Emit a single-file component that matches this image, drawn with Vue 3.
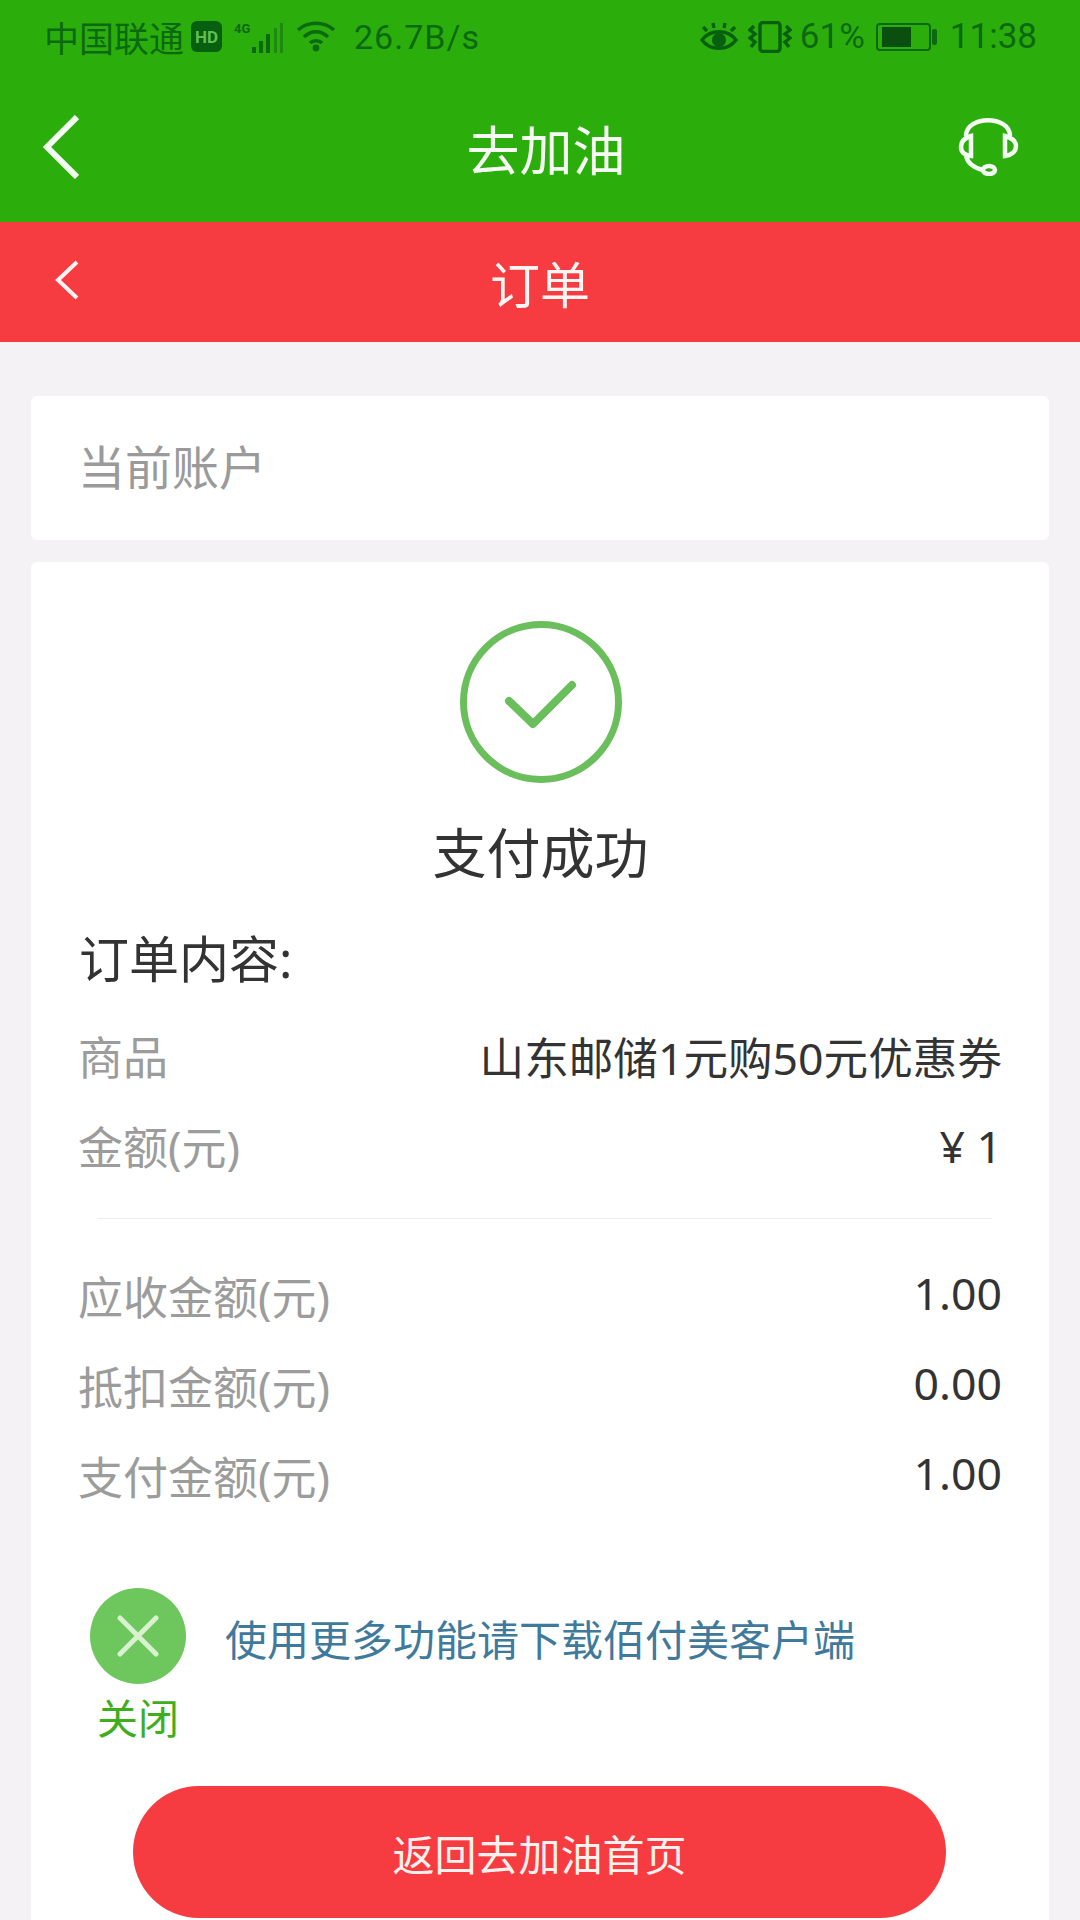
<template>
  <div class="page">
    <div class="topbar">
      <div class="status">
        <div class="status-left">
          <span class="carrier">中国联通</span>
          <svg class="hd" width="31" height="31" viewBox="0 0 31 31">
            <rect width="31" height="31" rx="6" fill="#075f10" />
            <text x="15.5" y="22" text-anchor="middle" class="hd-text">HD</text>
          </svg>
          <svg class="signal" width="52" height="32" viewBox="0 0 52 32">
            <text x="0" y="12" class="g-text">4G</text>
            <g fill="#0b6a10">
              <rect x="18" y="26" width="4" height="6" />
              <rect x="25" y="20" width="4" height="12" />
              <rect x="32" y="13" width="4" height="19" />
            </g>
            <g fill="#1f8a10">
              <rect x="40" y="7" width="3" height="25" />
              <rect x="46" y="2" width="3" height="30" />
            </g>
          </svg>
          <svg class="wifi" width="38" height="32" viewBox="0 0 38 32" fill="none" stroke="#0b6a10" stroke-width="3.6">
            <path d="M1 9C11 0 27 0 37 9" />
            <path d="M7 16C14 9 24 9 31 16" />
            <path d="M13 22C16 19 22 19 25 22" />
            <circle cx="19" cy="27" r="3.4" fill="#0b6a10" stroke="none" />
          </svg>
          <span class="speed">26.7B/s</span>
        </div>
        <div class="status-right">
          <svg class="eye" width="38" height="30" viewBox="0 0 38 30" fill="none" stroke="#075f10" stroke-width="3.4">
            <path d="M2 18C10 7 28 7 36 18C28 29 10 29 2 18Z" />
            <circle cx="19" cy="18" r="7" fill="#075f10" stroke="none" />
            <path d="M7 9L3 5M14 6L13 1M24 6L25 1M31 9L35 5" />
          </svg>
          <svg class="vibrate" width="44" height="32" viewBox="0 0 44 32" fill="none" stroke="#075f10" stroke-width="3.4">
            <rect x="12" y="1.5" width="20" height="29" rx="3" />
            <path d="M6 5L2 9L7 13L2 17L7 21L3 26" />
            <path d="M38 5L42 9L37 13L42 17L37 21L41 26" />
          </svg>
          <span class="pct">61%</span>
          <svg class="battery" width="62" height="28" viewBox="0 0 62 28">
            <rect x="1" y="1" width="53" height="26" rx="3" fill="none" stroke="#0b6a10" stroke-width="2" />
            <rect x="6" y="4" width="29" height="20" fill="#0a4f10" />
            <rect x="56" y="6" width="5" height="16" rx="2" fill="#0b6a10" />
          </svg>
          <span class="clock">11:38</span>
        </div>
      </div>
      <div class="appbar">
        <svg class="back" width="37" height="64" viewBox="0 0 37 64" fill="none" stroke="#f4fbf2" stroke-width="6">
          <path d="M35 2L5 32L35 62" />
        </svg>
        <span class="app-title">去加油</span>
        <svg class="headset" width="61" height="58" viewBox="0 0 61 58" fill="none" stroke="#f4fbf2" stroke-width="4.5">
          <path d="M8 18C8 -3 52 -3 52 18" />
          <path d="M13 18C6 20 3 24 3 29C3 34 6 37 13 38Z" />
          <path d="M47 18L47 38C54 37 58 33 58 28C58 23 54 20 47 18Z" />
          <path d="M8 38C10 46 16 50 25 52" />
          <ellipse cx="31" cy="52" rx="6" ry="4" />
        </svg>
      </div>
    </div>

    <div class="subbar">
      <svg class="sub-back" width="24" height="40" viewBox="0 0 24 40" fill="none" stroke="#fff3f1" stroke-width="4">
        <path d="M22 2L3 20L22 38" />
      </svg>
      <span class="sub-title">订单</span>
      <span></span>
    </div>

    <div class="content">
      <div class="card account">当前账户</div>

      <div class="card order">
        <svg class="ok" width="164" height="164" viewBox="0 0 164 164" fill="none" stroke="#6abf5c">
          <circle cx="82" cy="82" r="77.5" stroke-width="7" />
          <path d="M50 81L74 104L113 65" stroke-width="8" stroke-linecap="round" stroke-linejoin="round" />
        </svg>
        <div class="pay-title">支付成功</div>
        <div class="order-head">订单内容:</div>

        <div v-for="row in goods" :key="row.label" class="row">
          <span class="label">{{ row.label }}</span>
          <span class="value">{{ row.value }}</span>
        </div>
        <div class="divider"></div>
        <div v-for="row in amounts" :key="row.label" class="row amount">
          <span class="label">{{ row.label }}</span>
          <span class="value">{{ row.value }}</span>
        </div>

        <div class="promo">
          <div class="close-box">
            <div class="close-btn">
              <svg width="42" height="42" viewBox="0 0 42 42" stroke="#d8f2d0" stroke-width="5" stroke-linecap="round">
                <path d="M3 3L39 39M39 3L3 39" />
              </svg>
            </div>
            <span class="close-text">关闭</span>
          </div>
          <span class="promo-text">使用更多功能请下载佰付美客户端</span>
        </div>

        <button class="home-btn">返回去加油首页</button>
      </div>
    </div>
  </div>
</template>

<script setup>
const goods = [
  { label: '商品', value: '山东邮储1元购50元优惠券' },
  { label: '金额(元)', value: '¥ 1' }
]

const amounts = [
  { label: '应收金额(元)', value: '1.00' },
  { label: '抵扣金额(元)', value: '0.00' },
  { label: '支付金额(元)', value: '1.00' }
]
</script>

<style>
html, body { margin: 0; background: #f4f2f4; }
</style>

<style scoped>
.page {
  width: 1080px; height: 1920px; overflow: hidden;
  background: #f4f2f4;
  font-family: "Noto Sans", "Noto Sans CJK SC", sans-serif;
}
.topbar { height: 222px; background: #2bae0c; }
.status {
  height: 75px; padding: 0 43px 2px 44px; box-sizing: border-box;
  display: flex; justify-content: space-between; align-items: center;
  color: #0b6a10; font-family: Roboto, "Noto Sans CJK SC", sans-serif;
}
.status-left, .status-right { display: flex; align-items: center; }
.carrier { font-size: 35px; width: 147px; font-family: "Noto Sans CJK SC", sans-serif; }
.hd-text { font: 700 17px Roboto, sans-serif; fill: #5fbf50; }
.g-text { font: 700 13px Roboto, sans-serif; fill: #0b6a10; }
.signal { margin-left: 12px; }
.wifi { margin-left: 11px; }
.speed { margin-left: 19px; font-size: 34px; letter-spacing: 1px; }
.vibrate { margin-left: 10px; }
.pct { margin-left: 8px; font-size: 35px; }
.battery { margin-left: 11px; }
.clock { margin-left: 12px; font-size: 35px; }
.appbar {
  height: 147px; padding: 0 30px 0 42px;
  display: grid; grid-template-columns: 1fr auto 1fr; align-items: center;
}
.app-title { font-size: 53px; color: #f6fcf4; }
.headset { justify-self: end; margin-right: 31px; margin-top: -3px; }
.back { margin-top: -3px; }
.subbar {
  height: 120px; padding: 0 55px; background: #f63c41;
  display: grid; grid-template-columns: 1fr auto 1fr; align-items: center;
}
.sub-back { margin-top: -4px; }
.sub-title { font-size: 50px; color: #fff6f4; }
.content { padding: 54px 31px 0; }
.card {
  background: #fff; border-radius: 6px;
  box-sizing: border-box;
}
.account {
  height: 144px; padding: 0 0 8px 47px;
  display: flex; align-items: center;
  font-size: 47px; color: #9a9a9a;
}
.order {
  margin-top: 22px; padding: 58px 47px 40px 48px;
  display: flex; flex-direction: column;
}
.ok { align-self: center; }
.pay-title { margin-top: 31px; text-align: center; font-size: 54px; line-height: 76px; color: #333; }
.order-head { margin-top: 33px; font-size: 50px; line-height: 70px; color: #333; }
.row {
  height: 90px; display: flex; justify-content: space-between; align-items: center;
  font-size: 45px;
}
.order-head + .row { margin-top: 16px; }
.label { color: #9c9c9c; margin-left: -1px; }
.value { color: #333; font-size: 44.6px; }
.amount .value { margin-bottom: 5px; }
.divider { height: 1px; margin: 28px 10px 31px 18px; background: #ededed; }
.promo { margin-top: 68px; display: flex; align-items: flex-start; }
.close-box { margin-left: 11px; width: 96px; display: flex; flex-direction: column; align-items: center; }
.close-btn {
  width: 96px; height: 96px; border-radius: 50%; background: #6dc75c;
  display: flex; align-items: center; justify-content: center;
}
.close-text { margin-top: 5px; font-size: 41px; line-height: 58px; color: #3fae1c; }
.promo-text { margin: 4px 0 0 39px; font-size: 42px; line-height: 96px; color: #3f7a9c; }
.home-btn {
  align-self: center; margin-top: 39px; margin-left: -2px;
  width: 813px; height: 132px; border: none; border-radius: 66px;
  background: #f63c41; color: #fff1ee;
  font: 400 42px "Noto Sans CJK SC", sans-serif;
}
</style>
